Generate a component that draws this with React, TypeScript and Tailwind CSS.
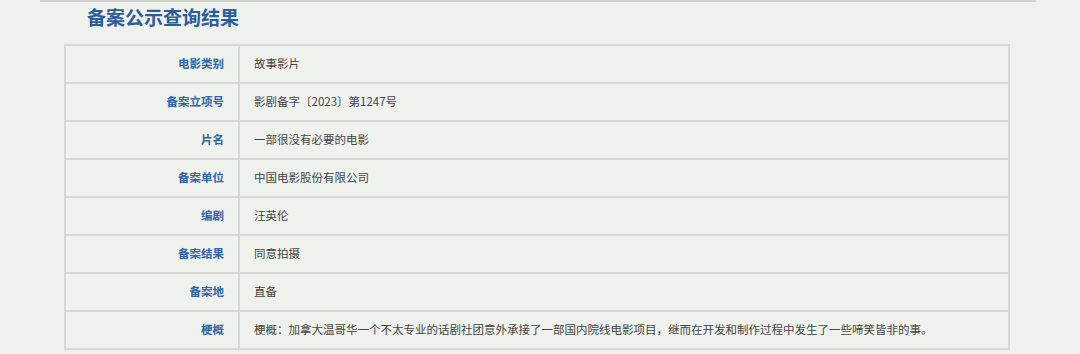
const rows: [string, string][] = [
  ["电影类别", "故事影片"],
  ["备案立项号", "影剧备字〔2023〕第1247号"],
  ["片名", "一部很没有必要的电影"],
  ["备案单位", "中国电影股份有限公司"],
  ["编剧", "汪英伦"],
  ["备案结果", "同意拍摄"],
  ["备案地", "直备"],
  ["梗概", "梗概：加拿大温哥华一个不太专业的话剧社团意外承接了一部国内院线电影项目，继而在开发和制作过程中发生了一些啼笑皆非的事。"],
];

export default function App() {
  return (
    <div
      className="h-[354px] w-[1080px] overflow-hidden bg-[#eef1ec]"
      style={{ fontFamily: '"Microsoft YaHei", "Noto Sans CJK SC", sans-serif' }}
    >
      <div className="ml-[40px] h-[2px] w-[996px] bg-[#d2d4d0]" />
      <h1 className="ml-[87px] mt-[3px] h-[39px] text-[19px] leading-[24px] font-bold text-[#2c5c9c]">
        备案公示查询结果
      </h1>
      <table className="ml-[64px] w-[946px] border-collapse border-2 border-[#d6d8d4] text-[11.5px]">
        <tbody>
          {rows.map(([k, v]) => (
            <tr key={k} className="h-[38px] border-b-2 border-[#d6d8d4]">
              <td className="w-[174px] border-r-2 border-[#d6d8d4] pr-[14px] text-right font-bold text-[#2e64a8]">
                {k}
              </td>
              <td className="pl-[14px] text-[#444]">{v}</td>
            </tr>
          ))}
        </tbody>
      </table>
    </div>
  );
}
